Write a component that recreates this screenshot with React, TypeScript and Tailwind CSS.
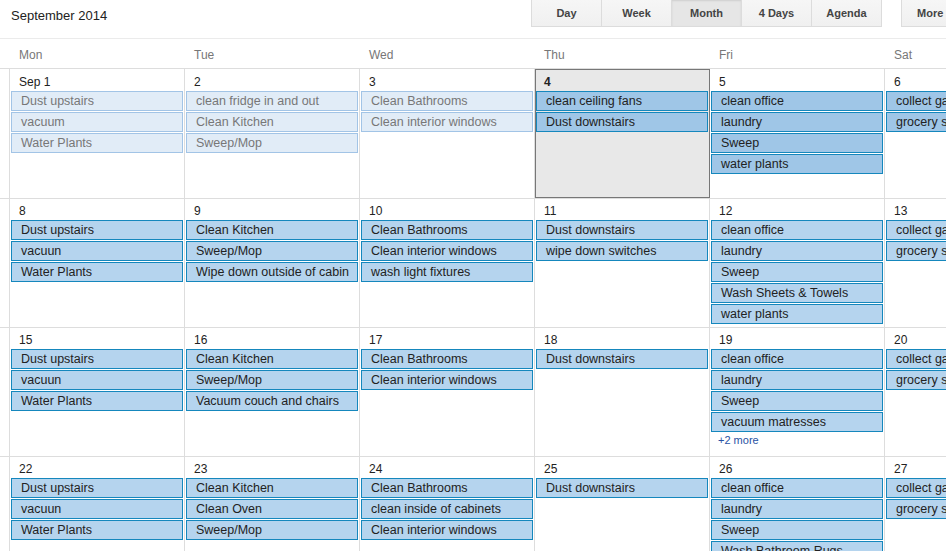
import React from "react"

type Cell = {
  label: string
  events: string[]
  more?: string
}

const days = ["Mon", "Tue", "Wed", "Thu", "Fri", "Sat", "Sun"]
const views = ["Day", "Week", "Month", "4 Days", "Agenda"]

const weeks: Cell[][] = [
  [
    { label: "Sep 1", events: ["Dust upstairs", "vacuum", "Water Plants"] },
    { label: "2", events: ["clean fridge in and out", "Clean Kitchen", "Sweep/Mop"] },
    { label: "3", events: ["Clean Bathrooms", "Clean interior windows"] },
    { label: "4", events: ["clean ceiling fans", "Dust downstairs"] },
    { label: "5", events: ["clean office", "laundry", "Sweep", "water plants"] },
    { label: "6", events: ["collect garbage", "grocery shopping"] },
    { label: "7", events: [] },
  ],
  [
    { label: "8", events: ["Dust upstairs", "vacuun", "Water Plants"] },
    { label: "9", events: ["Clean Kitchen", "Sweep/Mop", "Wipe down outside of cabin"] },
    { label: "10", events: ["Clean Bathrooms", "Clean interior windows", "wash light fixtures"] },
    { label: "11", events: ["Dust downstairs", "wipe down switches"] },
    { label: "12", events: ["clean office", "laundry", "Sweep", "Wash Sheets & Towels", "water plants"] },
    { label: "13", events: ["collect garbage", "grocery shopping"] },
    { label: "14", events: [] },
  ],
  [
    { label: "15", events: ["Dust upstairs", "vacuun", "Water Plants"] },
    { label: "16", events: ["Clean Kitchen", "Sweep/Mop", "Vacuum couch and chairs"] },
    { label: "17", events: ["Clean Bathrooms", "Clean interior windows"] },
    { label: "18", events: ["Dust downstairs"] },
    { label: "19", events: ["clean office", "laundry", "Sweep", "vacuum matresses"], more: "+2 more" },
    { label: "20", events: ["collect garbage", "grocery shopping"] },
    { label: "21", events: [] },
  ],
  [
    { label: "22", events: ["Dust upstairs", "vacuun", "Water Plants"] },
    { label: "23", events: ["Clean Kitchen", "Clean Oven", "Sweep/Mop"] },
    { label: "24", events: ["Clean Bathrooms", "clean inside of cabinets", "Clean interior windows"] },
    { label: "25", events: ["Dust downstairs"] },
    { label: "26", events: ["clean office", "laundry", "Sweep", "Wash Bathroom Rugs"] },
    { label: "27", events: ["collect garbage", "grocery shopping"] },
    { label: "28", events: [] },
  ],
]

function EventChip({ text, kind }: { text: string; kind: "past" | "near" | "later" }) {
  const style =
    kind === "past"
      ? "bg-[#e1ecf7] border-[#a2c4e6] text-[#777]"
      : kind === "near"
        ? "bg-[#9fc6e7] border-[#1587bd] text-[#222]"
        : "bg-[#b5d4ee] border-[#1587bd] text-[#222]"
  return (
    <div className={`mx-px mb-px h-[20px] border pl-[9px] text-[12.5px] leading-[18px] whitespace-nowrap overflow-hidden ${style}`}>
      {text}
    </div>
  )
}

export default function App() {
  return (
    <div className="w-[946px] h-[551px] overflow-hidden bg-white font-['Liberation_Sans',Arial,sans-serif]">
      {/* Top toolbar */}
      <div className="flex h-[39px] border-b border-[#ebebeb] overflow-hidden">
        <div className="w-[531px] shrink-0 pl-[11px] pt-[6px] text-[13px] text-[#222]">September 2014</div>
        <div className="flex shrink-0 h-[28px] -mt-px">
          {views.map((v, i) => (
            <div
              key={v}
              className={`w-[71px] h-[28px] flex items-center justify-center border border-[#dcdcdc] text-[11px] font-bold text-[#444] ${i > 0 ? "-ml-px" : ""} ${
                v === "Month"
                  ? "bg-[#e6e6e6] shadow-[inset_0_1px_2px_rgba(0,0,0,0.1)]"
                  : "bg-gradient-to-b from-[#f6f6f6] to-[#f0f0f0]"
              }`}
            >
              {v}
            </div>
          ))}
        </div>
        <div className="ml-[19px] shrink-0 w-[72px] h-[28px] -mt-px flex items-center pl-[15px] border border-[#dcdcdc] bg-gradient-to-b from-[#f6f6f6] to-[#f0f0f0] text-[11px] font-bold text-[#444]">
          More
        </div>
      </div>

      {/* Day names */}
      <div className="flex h-[30px] border-b border-[#dddddd]">
        <div className="w-[10px] shrink-0" />
        {days.map((d) => (
          <div key={d} className="w-[175px] shrink-0 pl-[9px] pt-[7px] text-[12px] text-[#777]">
            {d}
          </div>
        ))}
      </div>

      {/* Weeks */}
      {weeks.map((week, wi) => (
        <div key={wi} className={`flex border-b border-[#dddddd] ${wi === 0 ? "h-[130px]" : "h-[129px]"}`}>
          <div className="w-[10px] shrink-0 border-r border-[#dddddd]" />
          {week.map((cell, ci) => {
            const isToday = wi === 0 && ci === 3
            const kind = wi === 0 ? (ci < 3 ? "past" : "near") : "later"
            return (
              <div
                key={ci}
                className={`w-[175px] shrink-0 border-r border-[#dddddd] ${
                  isToday ? "bg-[#e8e8e8] outline outline-1 outline-[#777] -outline-offset-1" : ""
                }`}
              >
                <div
                  className={`pl-[9px] text-[12px] text-[#222] ${wi === 0 ? "h-[22px] pt-[4px]" : "h-[21px] pt-[3px]"} ${
                    isToday ? "font-bold" : ""
                  }`}
                >
                  {cell.label}
                </div>
                {cell.events.map((e, ei) => (
                  <EventChip key={ei} text={e} kind={kind} />
                ))}
                {cell.more && (
                  <div className="pl-[8px] text-[11px] leading-[14px] text-[#2952a3]">{cell.more}</div>
                )}
              </div>
            )
          })}
        </div>
      ))}
    </div>
  )
}
